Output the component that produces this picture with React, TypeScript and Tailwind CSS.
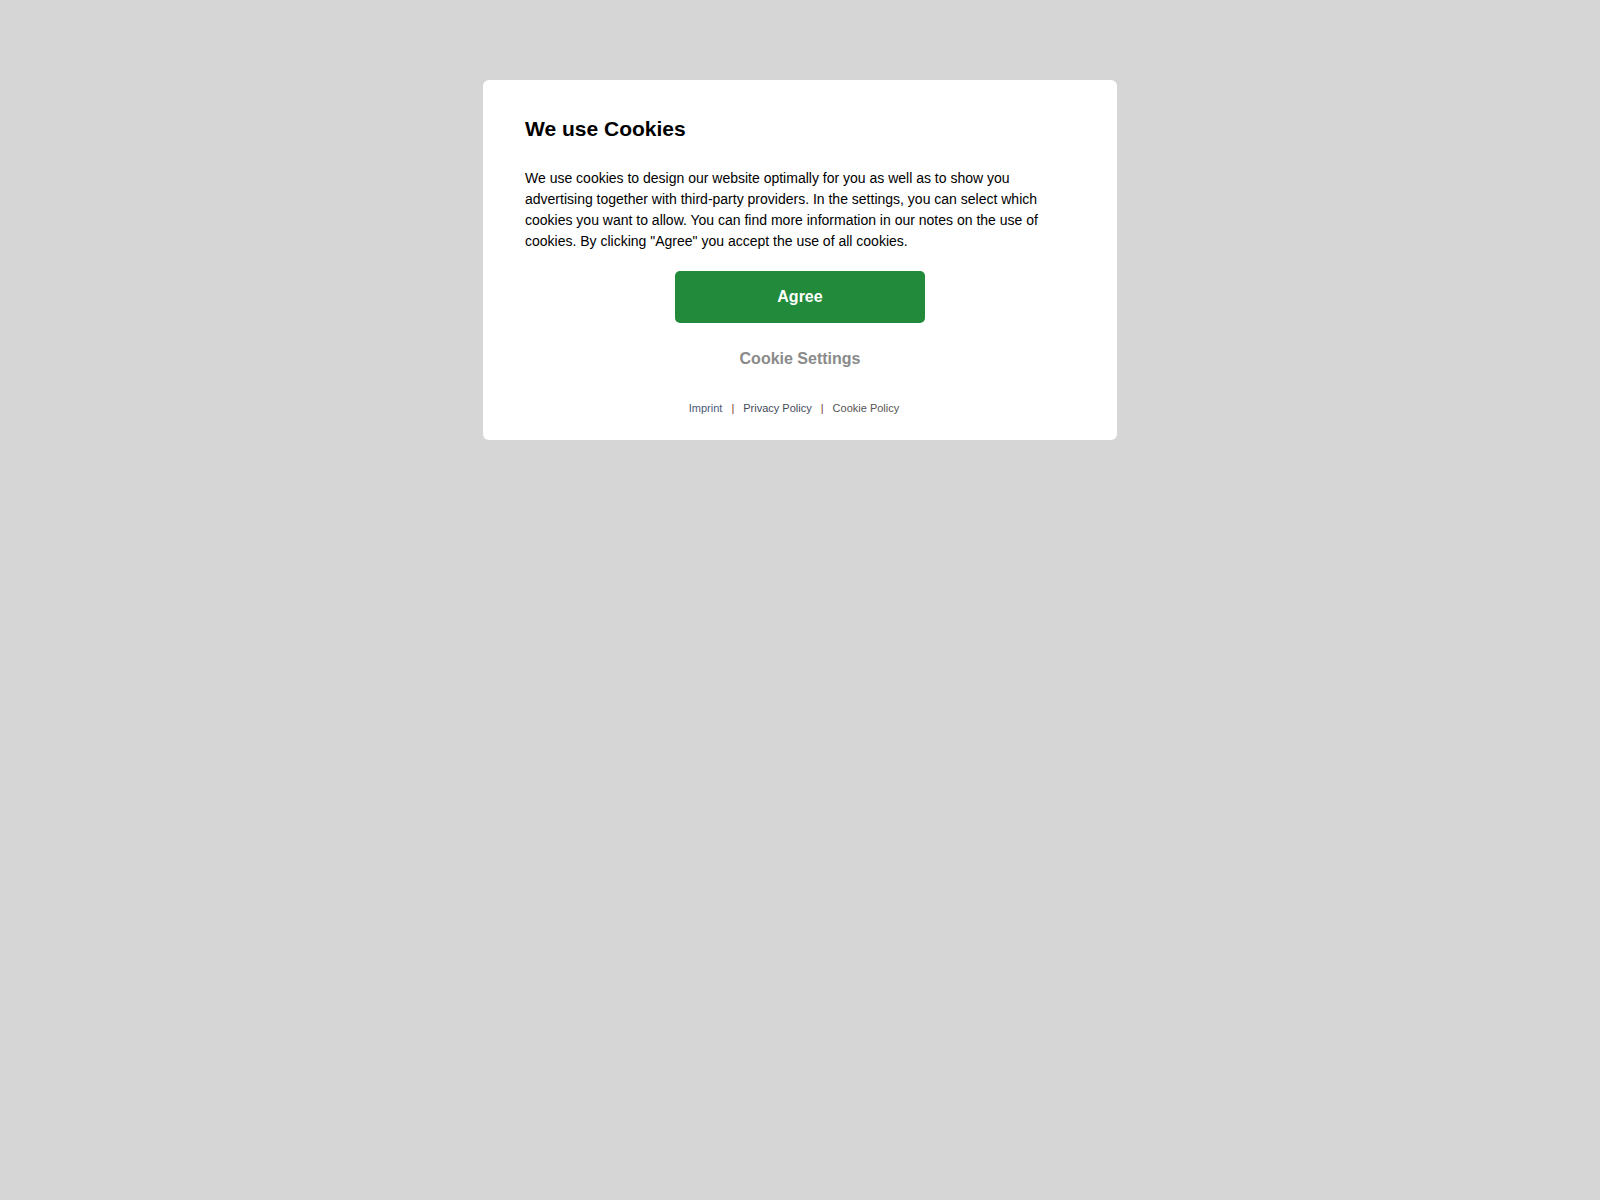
export default function App() {
  return (
    <div
      className="flex min-h-screen w-full justify-center bg-[#d6d6d6] pt-[80px]"
      style={{ fontFamily: '"Liberation Sans", Arial, sans-serif' }}
    >
      <div className="flex h-fit w-[634px] flex-col rounded-[6px] bg-white px-[42px] pb-[25px] pt-[37px]">
        <h1 className="text-[21px] font-bold leading-[24px] text-black">We use Cookies</h1>

        <p className="mt-[27px] text-[14px] leading-[21px] text-black">
          We use cookies to design our website optimally for you as well as to show you
          advertising together with third-party providers. In the settings, you can select
          which cookies you want to allow. You can find more information in our notes on the
          use of cookies. By clicking "Agree" you accept the use of all cookies.
        </p>

        <button
          type="button"
          className="mx-auto mt-[19px] h-[52px] w-[250px] rounded-[5px] bg-[#218a3b] text-[16px] font-bold text-white"
        >
          Agree
        </button>

        <button
          type="button"
          className="mx-auto mt-[26px] text-[16px] font-bold leading-[20px] text-[#8a8a8a]"
        >
          Cookie Settings
        </button>

        <div className="mt-[32px] flex items-center justify-center pr-[12px] text-[11px] leading-[14px]">
          <a href="#" className="text-[#4a5a78]">Imprint</a>
          <span className="mx-[9px] text-[#7a3a2c]">|</span>
          <a href="#" className="text-[#3f4a5a]">Privacy Policy</a>
          <span className="mx-[9px] text-[#7a3a2c]">|</span>
          <a href="#" className="text-[#555555]">Cookie Policy</a>
        </div>
      </div>
    </div>
  );
}
